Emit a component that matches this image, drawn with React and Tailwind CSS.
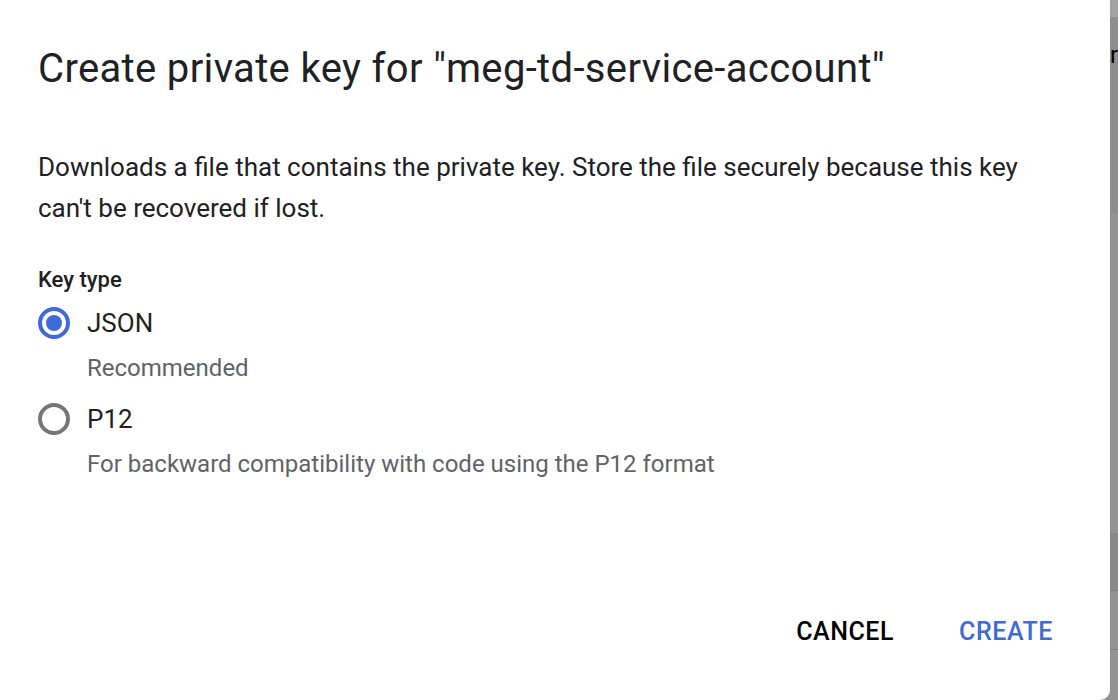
import React, { useState } from 'react';

function Radio({ checked }) {
  return (
    <span
      className={`flex items-center justify-center w-[32px] h-[32px] rounded-full border-[4px] ${
        checked ? 'border-[#3f6ad8]' : 'border-[#767676]'
      }`}
    >
      {checked && <span className="w-[16px] h-[16px] rounded-full bg-[#3f6ad8]" />}
    </span>
  );
}

function KeyOption({ label, hint, checked, onSelect }) {
  return (
    <div className="flex flex-col">
      <button type="button" onClick={onSelect} className="flex items-center gap-[17px] h-[44px] text-left">
        <Radio checked={checked} />
        <span className="text-[26px] leading-[30px] text-[#1f1f1f]">{label}</span>
      </button>
      <div className="pl-[49px] pt-[8px] text-[24px] leading-[30px] text-[#5f6368]">{hint}</div>
    </div>
  );
}

export default function App() {
  const [keyType, setKeyType] = useState('json');

  return (
    <div className="flex w-[1118px] h-[700px] overflow-hidden bg-[#8f8f8f] font-['Roboto',sans-serif]">
      <div className="flex flex-col w-[1110px] h-[700px] bg-white rounded-br-[10px] pl-[38px] pr-[57px]">
        <h1 className="pt-[45px] text-[40px] leading-[48px] text-[#202124] tracking-[0.35px]">
          Create private key for "meg-td-service-account"
        </h1>

        <p className="mt-[54px] mr-[15px] text-[26px] leading-[41px] text-[#202124]">
          Downloads a file that contains the private key. Store the file securely because this key can't be recovered if lost.
        </p>

        <div className="mt-[37px] text-[22px] leading-[28px] font-medium text-[#202124]">Key type</div>

        <div className="mt-[7px] flex flex-col gap-[14px]">
          <KeyOption
            label="JSON"
            hint="Recommended"
            checked={keyType === 'json'}
            onSelect={() => setKeyType('json')}
          />
          <KeyOption
            label="P12"
            hint="For backward compatibility with code using the P12 format"
            checked={keyType === 'p12'}
            onSelect={() => setKeyType('p12')}
          />
        </div>

        <div className="mt-auto mb-[53px] flex justify-end gap-[65px]">
          <button type="button" className="text-[25px] leading-[30px] font-medium text-black tracking-[0.55px]">CANCEL</button>
          <button type="button" className="text-[25px] leading-[30px] font-medium text-[#3f6ad8] tracking-[0.55px]">CREATE</button>
        </div>
      </div>

      <div className="flex flex-col w-[8px] h-[700px]">
        <div className="h-[17px] bg-[#a3a3a3]" />
        <div className="relative h-[196px] bg-[#8e8e8e] overflow-hidden">
          <span className="absolute left-0 top-[26px] text-[24px] leading-none text-black">r</span>
        </div>
        <div className="h-[320px] bg-[#939393]" />
        <div className="h-[57px] bg-[#8a8a8a]" />
        <div className="h-[1px] bg-[#7d7d7d]" />
        <div className="h-[58px] bg-[#939393]" />
        <div className="h-[1px] bg-[#7d7d7d]" />
        <div className="flex-1 bg-[#939393]" />
      </div>
    </div>
  );
}
